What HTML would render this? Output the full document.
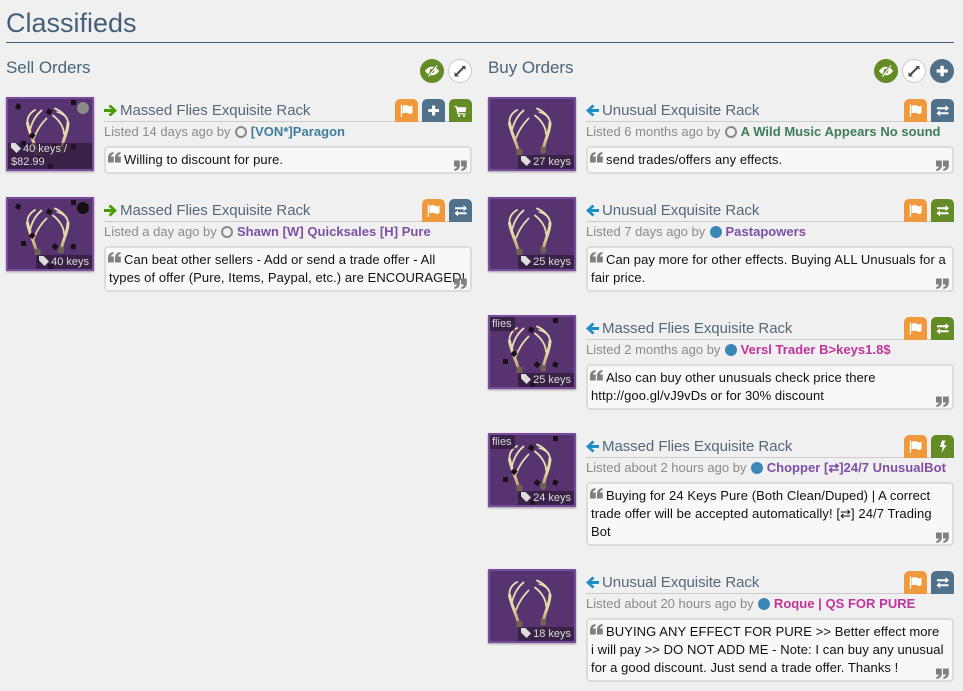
<!DOCTYPE html>
<html><head><meta charset="utf-8"><style>
html,body{margin:0;padding:0;background:#f0f0f0;width:963px;height:691px;overflow:hidden;font-family:"Liberation Sans",Arial,sans-serif}
h1{position:absolute;left:6px;top:6px;margin:0;font-size:27px;line-height:34px;font-weight:400;color:#446078}
.hr{position:absolute;left:6px;top:42px;width:948px;height:1px;background:#446078}
h2{position:absolute;top:58px;margin:0;font-size:17px;line-height:20px;font-weight:400;color:#4a6478;letter-spacing:-.05px}
.rb{position:absolute;top:59px;width:24px;height:24px;border-radius:50%;box-sizing:border-box}
.rb svg{position:absolute;left:0;top:0;width:24px;height:24px}
.th{position:absolute;width:88px;height:74px;box-sizing:border-box;border:2px solid #7b4b9e;background:#573370;box-shadow:0 1px 2px rgba(0,0,0,.35);overflow:hidden}
.th>svg{position:absolute;left:-2px;top:-2px;width:88px;height:74px}
.p{position:absolute;right:0;bottom:0;height:14px;line-height:14px;background:rgba(38,22,48,.62);color:#ddd;font-size:11px;padding:0 3px 0 3px;white-space:nowrap}
.p svg{width:10px;height:10px;vertical-align:-1px;margin-right:2px}
.fl{position:absolute;left:0;top:0;height:14px;line-height:14px;background:rgba(38,22,48,.62);color:#ddd;font-size:11px;padding:0 3px 0 2px}
.t{position:absolute;height:23px;border-bottom:1px solid #ccc;box-sizing:content-box;width:368px;font-size:15px;line-height:25px;color:#55687a;white-space:nowrap}
.t svg{position:absolute;left:0;top:6px;width:13px;height:13px}
.t span{position:absolute;left:16px;top:0;letter-spacing:-.05px}
.b{position:absolute;width:23px;height:23px;border-radius:5px 5px 0 0}
.b svg{position:absolute;left:0;top:0;width:23px;height:23px}
.or{background:#f0993c}.bl{background:#517089}.gr{background:#648b26}
.l{position:absolute;font-size:13px;line-height:16px;color:#8a8a8a;white-space:nowrap}
.l b{font-weight:700;letter-spacing:.03px}
.d{display:inline-block;width:12px;height:12px;border-radius:50%;box-sizing:border-box;vertical-align:-2px;margin:0 0 0 1px}
.h{border:2px solid #8a8a8a}.f{background:#3b87b5}
.q{position:absolute;width:368px;box-sizing:border-box;border:2px solid #dcdcdc;border-radius:4px;background:#f8f8f8;font-size:13px;line-height:18px;color:#111;padding:3px 3px 3px 3px;white-space:nowrap;letter-spacing:.08px}
.q svg{position:absolute;width:13px;height:11px}
.q .a{left:2px;top:4px}.q .z{right:3px;bottom:1px}
.q .i{display:inline-block;width:15px}
</style></head><body>
<svg width="0" height="0" style="position:absolute">
<defs>
<linearGradient id="ag" gradientUnits="userSpaceOnUse" x1="0" y1="11" x2="0" y2="58"><stop offset="0" stop-color="#efe2b8"/><stop offset=".6" stop-color="#e6d6a2"/><stop offset=".85" stop-color="#bfa873"/><stop offset="1" stop-color="#7d6f50"/></linearGradient>
</defs>
<symbol id="ant" viewBox="0 0 88 74">
<g fill="none" stroke="url(#ag)" stroke-linecap="round">
<path d="M31 57C29.500 47 23 36 21.500 26" stroke-width="3"/>
<path d="M21.500 26C21 20 24 16 29 13" stroke-width="1.800"/>
<path d="M24 33C26 25 30 18 35.500 13.500" stroke-width="1.800"/>
<path d="M28 41C31 33 35 27 40.500 21.500" stroke-width="1.800"/>
<path d="M55 55C55 46 62 36 62 26" stroke-width="3"/>
<path d="M62 26C62 20 55 14 49 11.500" stroke-width="1.800"/>
<path d="M61 21C58 18 55 16 51 15" stroke-width="1.400"/>
<path d="M58 37C58 30 53 23 47 18.500" stroke-width="1.800"/>
</g>
<rect x="28.500" y="52" width="6" height="6" fill="#6d6350"/><rect x="52.500" y="50" width="5.500" height="6" fill="#6d6350"/>
</symbol>
<symbol id="flies" viewBox="0 0 88 74"><g fill="#17121a">
<rect x="10" y="7" width="5" height="5" transform="rotate(25 12 9)"/><rect x="65" y="3" width="5" height="5"/><rect x="41" y="12" width="5" height="5" transform="rotate(30 43 14)"/><rect x="24" y="36" width="5" height="5" transform="rotate(40 26 38)"/><rect x="15" y="44" width="5" height="5"/><rect x="65" y="47" width="5" height="5" transform="rotate(20 67 49)"/><rect x="47" y="47" width="5" height="5" transform="rotate(40 49 49)"/><rect x="42" y="67" width="5" height="5"/><rect x="32" y="60" width="5" height="5" transform="rotate(30 34 62)"/></g></symbol>
<symbol id="flag" viewBox="0 0 23 23"><path fill="#fff" d="M5.800 5.500H7V18H5.800zM7.500 7C9.500 5.700 12 6 13.500 7C14.500 7.600 16 7.500 17.500 6.500V14C16 15 14.500 15.200 13.500 14.500C12 13.500 9.500 13.500 7.500 14.500z"/></symbol>
<symbol id="plus" viewBox="0 0 23 23"><path fill="#fff" d="M10 6.500h3.200V10H17v3h-3.800v3.500H10V13H6.300v-3H10z"/></symbol>
<symbol id="cart" viewBox="0 0 23 23"><path fill="#fff" d="M5.500 7H8l.4 1.200H17.500L16.500 13H9.500l.3 1.200h6.700v1.200H8.500L7 8.200H5.500z"/><circle cx="10" cy="16.800" r="1.100" fill="#fff"/><circle cx="15" cy="16.800" r="1.100" fill="#fff"/></symbol>
<symbol id="ex" viewBox="0 0 23 23"><path fill="#fff" d="M6 8h8.500V6l3.500 3-3.500 3v-2H6zM17.500 13H9v-2l-3.500 3L9 17v-2h8.500z" transform="translate(0 .3)"/></symbol>
<symbol id="bolt" viewBox="0 0 23 23"><path fill="#fff" d="M11 5.500h3.500L12.700 10H15.500L10.500 18l1.300-6H9z"/></symbol>
<symbol id="eye" viewBox="0 0 24 24"><path fill="#fff" d="M5 12c2-3 4.500-4.300 7-4.300S17 9 19 12c-2 3-4.500 4.300-7 4.300S7 15 5 12z"/><circle cx="12" cy="12" r="2.300" fill="#648b26"/><path d="M8 17.500L16.500 6.500" stroke="#648b26" stroke-width="2.400"/><path d="M8.500 17.500L17 6.500" stroke="#fff" stroke-width="1.100"/></symbol>
<symbol id="exp" viewBox="0 0 24 24"><path fill="#4d4d4d" d="M13.500 7H17.500V11L16 9.500 9.500 16 11 17.500H6.500V13L8 14.500 14.500 8z"/></symbol>
<symbol id="tag" viewBox="0 0 10 10"><path fill="#ddd" d="M0 0h4.500L10 5.500 5.500 10 0 4.500z"/></symbol>
<symbol id="ql" viewBox="0 0 13 11"><path fill="#808080" d="M0 5.500C0 2.500 2 .5 5.500 0v2C4 2.300 3 3.200 3 4.500h2.800V10.500H0zM7 5.500C7 2.500 9 .5 12.500 0v2C11 2.300 10 3.200 10 4.500h2.800V10.500H7z"/></symbol>
<symbol id="qr" viewBox="0 0 13 11"><path fill="#808080" d="M5.800 5.500C5.800 8.500 3.800 10.500.3 11V9C1.800 8.700 2.800 7.800 2.800 6.500H0V.5H5.800zM12.800 5.500C12.800 8.500 10.800 10.500 7.300 11V9C8.800 8.700 9.800 7.800 9.800 6.500H7V.5H12.800z"/></symbol>
<symbol id="ar" viewBox="0 0 13 13"><path fill="#4a9a00" d="M6.500.5L13 6.500 6.500 12.500 4.500 10.500 7.500 8H0V5H7.500L4.500 2.500z"/></symbol>
<symbol id="al" viewBox="0 0 13 13"><path fill="#1f8cc4" d="M6.500.5L0 6.500 6.500 12.500 8.500 10.500 5.500 8H13V5H5.500L8.500 2.500z"/></symbol>
</svg>

<h1>Classifieds</h1><div class="hr"></div>
<h2 style="left:6px">Sell Orders</h2><h2 style="left:488px">Buy Orders</h2>
<div class="rb" style="left:420px;background:#648b26"><svg><use href="#eye"/></svg></div>
<div class="rb" style="left:448px;background:#fff;border:1px solid #ccc"><svg style="left:-1px;top:-1px"><use href="#exp"/></svg></div>
<div class="rb" style="left:874px;background:#648b26"><svg><use href="#eye"/></svg></div>
<div class="rb" style="left:902px;background:#fff;border:1px solid #ccc"><svg style="left:-1px;top:-1px"><use href="#exp"/></svg></div>
<div class="rb" style="left:930px;background:#517089"><svg><use href="#plus" x="0" y="0" width="24" height="24"/></svg></div>

<!-- Sell 1 -->
<div class="th" style="left:6px;top:97px"><svg><use href="#ant"/><use href="#flies"/><circle cx="77" cy="11" r="6" fill="#8a8a8a"/></svg>
<div class="p" style="left:0;height:26px;line-height:13px;padding:0 3px 0 3px;white-space:normal"><svg><use href="#tag"/></svg>40 keys /<br>$82.99</div></div>
<div class="t" style="left:104px;top:98px"><svg><use href="#ar"/></svg><span>Massed Flies Exquisite Rack</span></div>
<div class="b or" style="left:395px;top:99px"><svg><use href="#flag"/></svg></div>
<div class="b bl" style="left:422px;top:99px"><svg><use href="#plus"/></svg></div>
<div class="b gr" style="left:449px;top:99px"><svg><use href="#cart"/></svg></div>
<div class="l" style="left:104px;top:124px">Listed 14 days ago by <i class="d h"></i> <b style="color:#3f7d9e">[VON*]Paragon</b></div>
<div class="q" style="left:104px;top:146px;height:28px"><svg class="a"><use href="#ql"/></svg><span class="i"></span>Willing to discount for pure.<svg class="z"><use href="#qr"/></svg></div>

<!-- Sell 2 -->
<div class="th" style="left:6px;top:197px"><svg><use href="#ant"/><use href="#flies"/><circle cx="77" cy="11" r="6" fill="#141014"/></svg>
<div class="p"><svg><use href="#tag"/></svg>40 keys</div></div>
<div class="t" style="left:104px;top:198px"><svg><use href="#ar"/></svg><span>Massed Flies Exquisite Rack</span></div>
<div class="b or" style="left:422px;top:199px"><svg><use href="#flag"/></svg></div>
<div class="b bl" style="left:449px;top:199px"><svg><use href="#ex"/></svg></div>
<div class="l" style="left:104px;top:224px">Listed a day ago by <i class="d h"></i> <b style="color:#7d4fa5">Shawn [W] Quicksales [H] Pure</b></div>
<div class="q" style="left:104px;top:246px;height:46px"><svg class="a"><use href="#ql"/></svg><span class="i"></span>Can beat other sellers - Add or send a trade offer - All<br>types of offer (Pure, Items, Paypal, etc.) are ENCOURAGED!<svg class="z"><use href="#qr"/></svg></div>

<!-- Buy 1 -->
<div class="th" style="left:488px;top:97px"><svg><use href="#ant"/></svg><div class="p"><svg><use href="#tag"/></svg>27 keys</div></div>
<div class="t" style="left:586px;top:98px"><svg><use href="#al"/></svg><span>Unusual Exquisite Rack</span></div>
<div class="b or" style="left:904px;top:99px"><svg><use href="#flag"/></svg></div>
<div class="b bl" style="left:931px;top:99px"><svg><use href="#ex"/></svg></div>
<div class="l" style="left:586px;top:124px">Listed 6 months ago by <i class="d h"></i> <b style="color:#3e7d58">A Wild Music Appears No sound</b></div>
<div class="q" style="left:586px;top:146px;height:28px"><svg class="a"><use href="#ql"/></svg><span class="i"></span>send trades/offers any effects.<svg class="z"><use href="#qr"/></svg></div>

<!-- Buy 2 -->
<div class="th" style="left:488px;top:197px"><svg><use href="#ant"/></svg><div class="p"><svg><use href="#tag"/></svg>25 keys</div></div>
<div class="t" style="left:586px;top:198px"><svg><use href="#al"/></svg><span>Unusual Exquisite Rack</span></div>
<div class="b or" style="left:904px;top:199px"><svg><use href="#flag"/></svg></div>
<div class="b gr" style="left:931px;top:199px"><svg><use href="#ex"/></svg></div>
<div class="l" style="left:586px;top:224px">Listed 7 days ago by <i class="d f"></i> <b style="color:#7d4fa5">Pastapowers</b></div>
<div class="q" style="left:586px;top:246px;height:46px"><svg class="a"><use href="#ql"/></svg><span class="i"></span>Can pay more for other effects. Buying ALL Unusuals for a<br>fair price.<svg class="z"><use href="#qr"/></svg></div>

<!-- Buy 3 -->
<div class="th" style="left:488px;top:315px"><svg><use href="#ant"/><use href="#flies"/></svg><div class="fl">flies</div><div class="p"><svg><use href="#tag"/></svg>25 keys</div></div>
<div class="t" style="left:586px;top:316px"><svg><use href="#al"/></svg><span>Massed Flies Exquisite Rack</span></div>
<div class="b or" style="left:904px;top:317px"><svg><use href="#flag"/></svg></div>
<div class="b gr" style="left:931px;top:317px"><svg><use href="#ex"/></svg></div>
<div class="l" style="left:586px;top:342px">Listed 2 months ago by <i class="d f"></i> <b style="color:#c0339b">Versl Trader B&gt;keys1.8$</b></div>
<div class="q" style="left:586px;top:364px;height:46px"><svg class="a"><use href="#ql"/></svg><span class="i"></span>Also can buy other unusuals check price there<br>http://goo.gl/vJ9vDs or for 30% discount<svg class="z"><use href="#qr"/></svg></div>

<!-- Buy 4 -->
<div class="th" style="left:488px;top:433px"><svg><use href="#ant"/><use href="#flies"/></svg><div class="fl">flies</div><div class="p"><svg><use href="#tag"/></svg>24 keys</div></div>
<div class="t" style="left:586px;top:434px"><svg><use href="#al"/></svg><span>Massed Flies Exquisite Rack</span></div>
<div class="b or" style="left:904px;top:435px"><svg><use href="#flag"/></svg></div>
<div class="b gr" style="left:931px;top:435px"><svg><use href="#bolt"/></svg></div>
<div class="l" style="left:586px;top:460px">Listed about 2 hours ago by <i class="d f"></i> <b style="color:#7d4fa5">Chopper [⇄]24/7 UnusualBot</b></div>
<div class="q" style="left:586px;top:482px;height:64px"><svg class="a"><use href="#ql"/></svg><span class="i"></span>Buying for 24 Keys Pure (Both Clean/Duped) | A correct<br>trade offer will be accepted automatically! [⇄] 24/7 Trading<br>Bot<svg class="z"><use href="#qr"/></svg></div>

<!-- Buy 5 -->
<div class="th" style="left:488px;top:569px"><svg><use href="#ant"/></svg><div class="p"><svg><use href="#tag"/></svg>18 keys</div></div>
<div class="t" style="left:586px;top:570px"><svg><use href="#al"/></svg><span>Unusual Exquisite Rack</span></div>
<div class="b or" style="left:904px;top:571px"><svg><use href="#flag"/></svg></div>
<div class="b bl" style="left:931px;top:571px"><svg><use href="#ex"/></svg></div>
<div class="l" style="left:586px;top:596px">Listed about 20 hours ago by <i class="d f"></i> <b style="color:#c0339b">Roque | QS FOR PURE</b></div>
<div class="q" style="left:586px;top:618px;height:64px"><svg class="a"><use href="#ql"/></svg><span class="i"></span>BUYING ANY EFFECT FOR PURE &gt;&gt; Better effect more<br>i will pay &gt;&gt; DO NOT ADD ME - Note: I can buy any unusual<br>for a good discount. Just send a trade offer. Thanks !<svg class="z"><use href="#qr"/></svg></div>
</body></html>
